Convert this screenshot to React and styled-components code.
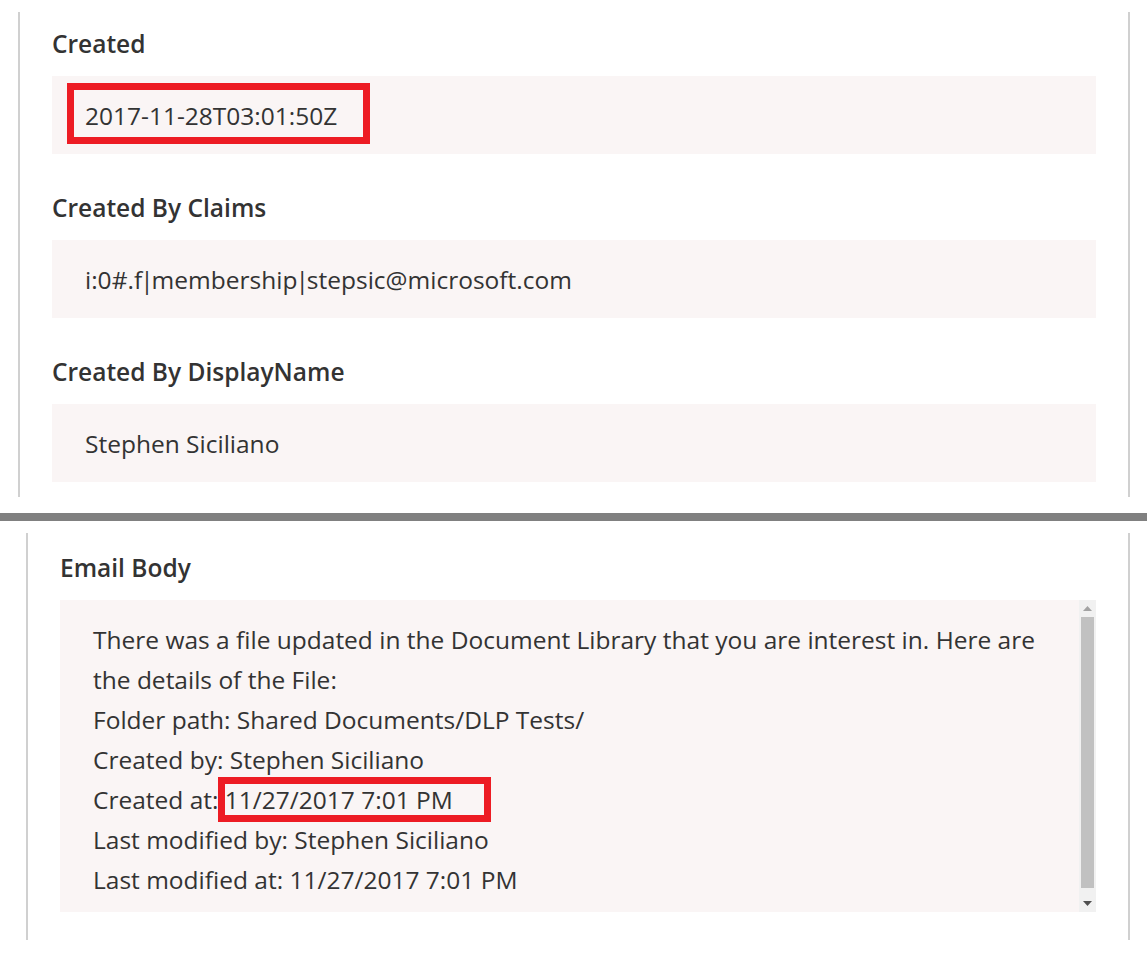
import React from 'react';
import styled, { createGlobalStyle } from 'styled-components';

const GlobalStyle = createGlobalStyle`
  body {
    margin: 0;
    background: #ffffff;
    font-family: 'Segoe UI', 'Open Sans', sans-serif;
    color: #333333;
  }
`;

const Page = styled.div`
  width: 1147px;
  height: 972px;
  overflow: hidden;
  background: #ffffff;
`;

const Pane = styled.div`
  margin: ${(props) => props.margin};
  border-left: 2px solid #d0d0d0;
  border-right: 2px solid #d0d0d0;
  padding: ${(props) => props.padding};
  height: ${(props) => props.height}px;
  box-sizing: border-box;
`;

const Divider = styled.div`
  height: 8px;
  background: #808080;
  margin-top: 16px;
  margin-bottom: 12px;
`;

const Field = styled.div`
  margin-bottom: 39px;
  &:last-child {
    margin-bottom: 0;
  }
`;

const Label = styled.div`
  font-size: 24.5px;
  font-weight: 600;
  line-height: 30px;
  margin-bottom: 17px;
  color: #333333;
`;

const ValueBox = styled.div`
  background: #faf5f5;
  height: 78px;
  display: flex;
  align-items: center;
  padding-left: 33px;
  font-size: 24.5px;
  color: #333333;
`;

const Pipe = styled.span`
  margin: 0 -2px;
`;

const Highlight = styled.span`
  position: relative;
  &::after {
    content: '';
    position: absolute;
    left: ${(props) => props.l}px;
    right: ${(props) => props.r}px;
    top: ${(props) => props.t}px;
    bottom: ${(props) => props.b}px;
    border: 7px solid #ed1c24;
    pointer-events: none;
  }
`;

const BodyBox = styled.div`
  background: #faf5f5;
  height: 312px;
  display: flex;
  position: relative;
`;

const BodyText = styled.div`
  flex: 1;
  padding: 20px 20px 0 33px;
  font-size: 24.5px;
  line-height: 40px;
  color: #333333;
  overflow: hidden;
  white-space: nowrap;
`;

const Scrollbar = styled.div`
  width: 17px;
  background: #f1f1f1;
  display: flex;
  flex-direction: column;
  align-items: center;
`;

const Arrow = styled.div`
  height: 17px;
  width: 17px;
  display: flex;
  align-items: center;
  justify-content: center;
`;

const Thumb = styled.div`
  flex: 1;
  width: 13px;
  background: #c1c1c1;
  margin-bottom: 7px;
`;

const claims = (
  <>
    i:0#.f<Pipe>|</Pipe>membership<Pipe>|</Pipe>stepsic@microsoft.com
  </>
);

const fields = [
  { label: 'Created', value: '2017-11-28T03:01:50Z', mark: true },
  { label: 'Created By Claims', value: claims },
  { label: 'Created By DisplayName', value: 'Stephen Siciliano' },
];

export default function App() {
  return (
    <Page>
      <GlobalStyle />
      <Pane margin="12px 17px 0 18px" padding="17px 32px 0 32px" height={485}>
        {fields.map((f) => (
          <Field key={f.label}>
            <Label>{f.label}</Label>
            <ValueBox>
              {f.mark ? (
                <Highlight l={-18} r={-33} t={-16} b={-12}>
                  {f.value}
                </Highlight>
              ) : (
                <span>{f.value}</span>
              )}
            </ValueBox>
          </Field>
        ))}
      </Pane>
      <Divider />
      <Pane margin="0 17px 0 26px" padding="20px 32px 0 32px" height={407}>
        <Label>Email Body</Label>
        <BodyBox>
          <BodyText>
            There was a file updated in the Document Library that you are interest in. Here are
            <br />
            the details of the File:
            <br />
            Folder path: Shared Documents/DLP Tests/
            <br />
            Created by: Stephen Siciliano
            <br />
            Created at:{' '}
            <Highlight l={-7} r={-38} t={-6} b={-6}>
              11/27/2017 7:01 PM
            </Highlight>
            <br />
            Last modified by: Stephen Siciliano
            <br />
            Last modified at: 11/27/2017 7:01 PM
          </BodyText>
          <Scrollbar>
            <Arrow>
              <svg width="9" height="5" viewBox="0 0 9 5">
                <path d="M0 5 L4.5 0 L9 5 Z" fill="#a3a3a3" />
              </svg>
            </Arrow>
            <Thumb />
            <Arrow>
              <svg width="9" height="5" viewBox="0 0 9 5">
                <path d="M0 0 L4.5 5 L9 0 Z" fill="#505050" />
              </svg>
            </Arrow>
          </Scrollbar>
        </BodyBox>
      </Pane>
    </Page>
  );
}
